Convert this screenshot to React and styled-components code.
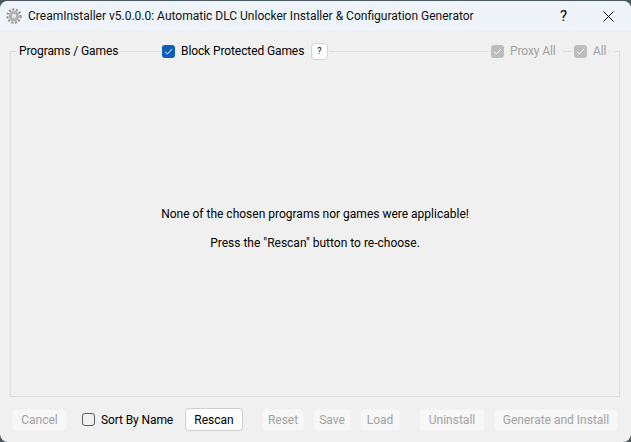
import React from "react";
import styled, { createGlobalStyle } from "styled-components";

const Global = createGlobalStyle`
  html, body { margin: 0; padding: 0; background: #4a5a60; }
  body { font-family: Roboto, "Noto Sans", sans-serif; font-size: 12px; color: #000; }
  * { box-sizing: border-box; }
`;

const Window = styled.div`
  width: 631px;
  height: 442px;
  padding-top: 1px;
  background: #4a5a60;
  display: flex;
  flex-direction: column;
`;

const Frame = styled.div`
  flex: 1;
  background: #f0f0f0;
  border-radius: 8px;
  display: flex;
  flex-direction: column;
  overflow: hidden;
`;

const TitleBar = styled.div`
  height: 30px;
  flex: none;
  background: #eef4f9;
  display: flex;
  align-items: center;
  padding-left: 6px;
`;

const Title = styled.div`
  margin-left: 6px;
  color: #111;
  flex: 1;
  white-space: nowrap;
`;

const TitleButton = styled.div`
  width: 45px;
  height: 30px;
  display: flex;
  align-items: center;
  justify-content: center;
  font-size: 15px;
`;

const Main = styled.div`
  flex: 1;
  display: flex;
  flex-direction: column;
  padding: 11px 11px 0 10px;
`;

const GroupHeader = styled.div`
  height: 18px;
  display: flex;
  align-items: center;
`;

const Line = styled.span`
  height: 1px;
  background: #dcdcdc;
  flex: ${(p) => (p.$grow ? 1 : "none")};
  width: ${(p) => (p.$w ? p.$w + "px" : "auto")};
  margin-left: ${(p) => p.$ml || 0}px;
`;

const GroupBody = styled.div`
  margin-top: -9px;
  height: 346px;
  flex: none;
  border: 1px solid #dcdcdc;
  border-top: 0;
  display: flex;
  flex-direction: column;
  align-items: center;
  justify-content: center;
  gap: 12px;
  padding-top: 10px;
`;

const Legend = styled.span`
  width: 102px;
  padding-left: 3px;
  letter-spacing: -0.1px;
  white-space: nowrap;
`;

const CheckRow = styled.label`
  display: flex;
  align-items: center;
  gap: 6px;
  margin-left: ${(p) => p.$ml || 0}px;
  width: ${(p) => p.$w}px;
  letter-spacing: -0.1px;
  white-space: nowrap;
  color: ${(p) => (p.$disabled ? "#a2a2a2" : "#000")};
`;

const Box = styled.span`
  width: 13px;
  height: 13px;
  flex: none;
  border-radius: 3px;
  display: flex;
  align-items: center;
  justify-content: center;
  background: ${(p) => (p.$state === "on" ? "#0a5fb8" : p.$state === "off" ? "transparent" : "#bdbdbd")};
  border: ${(p) => (p.$state === "off" ? "1px solid #5c5c5c" : "none")};
`;

const HelpButton = styled.span`
  width: 17px;
  height: 17px;
  flex: none;
  border: 1px solid #d4d4d4;
  border-radius: 4px;
  background: #fdfdfd;
  font-size: 9px;
  display: flex;
  align-items: center;
  justify-content: center;
`;

const Message = styled.div`
  line-height: 17px;
  color: #000;
`;

const Footer = styled.div`
  flex: 1;
  display: flex;
  align-items: center;
  padding-left: 2px;
`;

const Button = styled.button`
  height: ${(p) => (p.disabled ? 22 : 23)}px;
  width: ${(p) => p.$w}px;
  padding: 0;
  margin-left: ${(p) => p.$ml || 0}px;
  font: inherit;
  border-radius: 4px;
  border: 1px solid ${(p) => (p.disabled ? "#f3f3f3" : "#cfcfcf")};
  background: ${(p) => (p.disabled ? "#f7f7f7" : "#fdfdfd")};
  color: ${(p) => (p.disabled ? "#a2a2a2" : "#000")};
  white-space: nowrap;
`;

const Check = () => (
  <svg width="9" height="9" viewBox="0 0 9 9" fill="none" stroke="#fff" strokeWidth="1">
    <path d="M1 4.8 L3.4 7 L8 2" />
  </svg>
);

const Gear = () => (
  <svg width="16" height="16" viewBox="0 0 16 16">
    <circle cx="8" cy="8" r="6.6" fill="none" stroke="#989898" strokeWidth="2.2" strokeDasharray="2.1 1.55" />
    <circle cx="8" cy="8" r="5.2" fill="#b0b0b0" />
    <circle cx="8" cy="8" r="2.3" fill="#e6e6e6" />
  </svg>
);

const Close = () => (
  <svg width="11" height="11" viewBox="0 0 11 11" stroke="#111" strokeWidth="1">
    <path d="M0.5 0.5 L10.5 10.5 M10.5 0.5 L0.5 10.5" />
  </svg>
);

export default function App() {
  return (
    <Window>
      <Global />
      <Frame>
        <TitleBar>
          <Gear />
          <Title>CreamInstaller v5.0.0.0: Automatic DLC Unlocker Installer &amp; Configuration Generator</Title>
          <TitleButton>?</TitleButton>
          <TitleButton>
            <Close />
          </TitleButton>
        </TitleBar>
        <Main>
          <GroupHeader>
            <Line $w={6} />
            <Legend>Programs / Games</Legend>
            <Line $w={42} />
            <CheckRow $w={149} $ml={2}>
              <Box $state="on">
                <Check />
              </Box>
              Block Protected Games
            </CheckRow>
            <HelpButton>?</HelpButton>
            <Line $grow $ml={2} />
            <CheckRow $w={72} $ml={3} $disabled>
              <Box $state="dim">
                <Check />
              </Box>
              Proxy All
            </CheckRow>
            <Line $w={9} />
            <CheckRow $w={40} $ml={2} $disabled>
              <Box $state="dim">
                <Check />
              </Box>
              All
            </CheckRow>
            <Line $w={6} />
          </GroupHeader>
          <GroupBody>
            <Message>None of the chosen programs nor games were applicable!</Message>
            <Message>Press the "Rescan" button to re-choose.</Message>
          </GroupBody>
          <Footer>
            <Button disabled $w={55}>Cancel</Button>
            <CheckRow $ml={15} $w={88}>
              <Box $state="off" />
              Sort By Name
            </CheckRow>
            <Button $w={58} $ml={15}>Rescan</Button>
            <Button disabled $w={42} $ml={19}>Reset</Button>
            <Button disabled $w={38} $ml={9}>Save</Button>
            <Button disabled $w={40} $ml={9}>Load</Button>
            <Button disabled $w={66} $ml={19}>Uninstall</Button>
            <Button disabled $w={124} $ml={9}>Generate and Install</Button>
          </Footer>
        </Main>
      </Frame>
    </Window>
  );
}
